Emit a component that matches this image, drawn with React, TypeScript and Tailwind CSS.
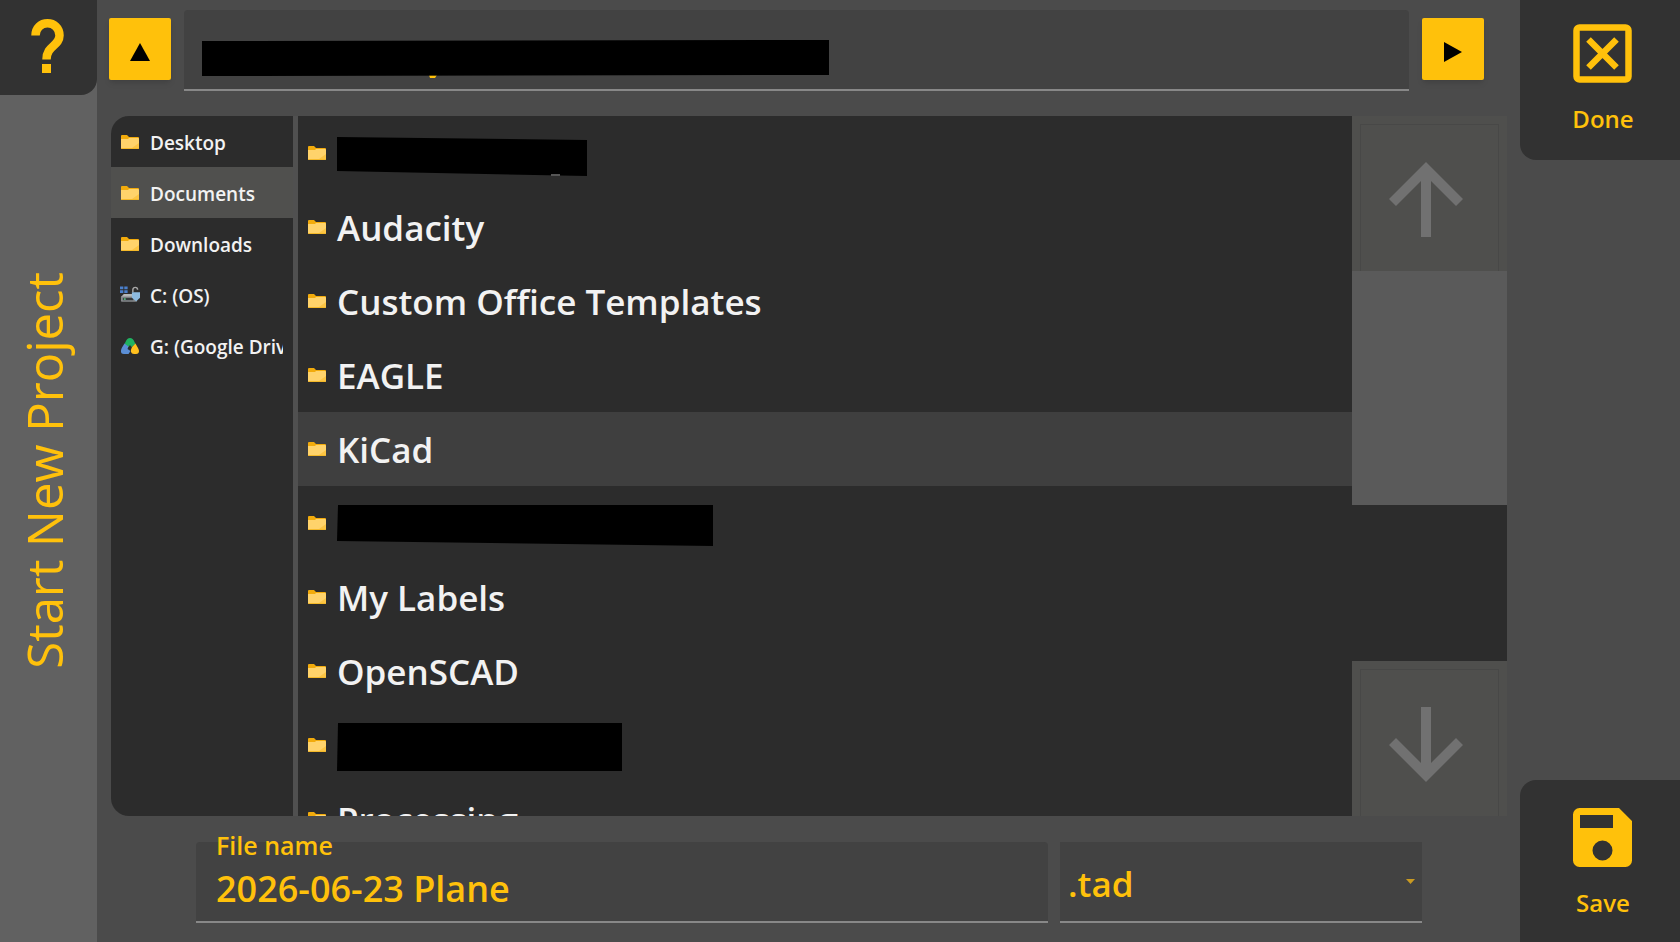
import React, { useState } from 'react'

type Redaction = {
  points: string
  mark?: string
  width: number
  height: number
}

type Entry = {
  name: string
  redaction?: Redaction
}

type Place = {
  name: string
  icon: React.ReactNode
}

const FolderIcon = () => (
  <svg width="20" height="16" viewBox="0 0 20 16" className="shrink-0" aria-hidden="true">
    <path d="M1 2a1 1 0 0 1 1-1h5l2 2h9a1 1 0 0 1 1 1v2H1z" fill="#f2ab0c" />
    <path d="M1 5h7l1-1h9a1 1 0 0 1 1 1v9a1 1 0 0 1-1 1H2a1 1 0 0 1-1-1z" fill="#ffd36b" />
    <path d="M1 14h18a1 1 0 0 1-1 1H2a1 1 0 0 1-1-1z" fill="#f5b929" />
    <path d="M19 9v5h-7z" fill="#fcc544" />
  </svg>
)

const DriveIcon = () => (
  <svg width="20" height="18" viewBox="0 0 21 18" className="shrink-0" aria-hidden="true">
    <path d="M0 0h3.500v3H0zM4.500 0h3.500v3H4.500zM0 4h3.500v3H0zM4.500 4h3.500v3H4.500z" fill="#4a7fcb" />
    <path d="M4 8h10l3 3H1z" fill="#b4b7b9" />
    <rect x="1" y="10.500" width="17" height="5.500" rx="1" fill="#85898c" />
    <rect x="3" y="12" width="11" height="2.500" fill="#35393b" />
    <rect x="4" y="12.500" width="2" height="1.500" fill="#5fd08a" />
    <path d="M13.500 6V3.500a2.500 2.500 0 0 1 5 0" fill="none" stroke="#a9a9a9" strokeWidth="1.500" />
    <path d="M12.500 6H21v6l-4 3.500-4.500-3.500z" fill="#8dbbe0" />
  </svg>
)

const GoogleDriveIcon = () => (
  <svg width="20" height="18" viewBox="0 0 20 18" className="shrink-0" aria-hidden="true">
    <path d="M5.500 5q1.500-4 4.500-4t4.500 4l1 2-4 3-1.500-2-1.500 2-4-3z" fill="#1fb261" />
    <path d="M4.500 6.500 8.500 9.500 7.500 12l3 2-2 3H4q-3.500 0-3-3.500 0-1 1-3z" fill="#5b8fd6" />
    <path d="M15.500 6.500 18 11q1 2 1 3 0 3-3 3h-2q-2.500 0-3-2t1-5z" fill="#ffc01e" />
  </svg>
)

const ArrowIcon = ({ className = '' }: { className?: string }) => (
  <svg width="74" height="75" viewBox="0 0 74 75" className={className} aria-hidden="true">
    <path d="M37 0 74 37l-7 7L42 19v56H32V19L7 44l-7-7z" fill="#717171" />
  </svg>
)

const places: Place[] = [
  { name: 'Desktop', icon: <FolderIcon /> },
  { name: 'Documents', icon: <FolderIcon /> },
  { name: 'Downloads', icon: <FolderIcon /> },
  { name: 'C: (OS)', icon: <DriveIcon /> },
  { name: 'G: (Google Drive)', icon: <GoogleDriveIcon /> },
]

const entries: Entry[] = [
  {
    name: '',
    redaction: {
      points: '0,5 250,8 250,44 0,39',
      mark: 'M214 42h9v2h-9z',
      width: 250,
      height: 44,
    },
  },
  { name: 'Audacity' },
  { name: 'Custom Office Templates' },
  { name: 'EAGLE' },
  { name: 'KiCad' },
  { name: '', redaction: { points: '1,2 376,2 376,43 0,38', width: 376, height: 43 } },
  { name: 'My Labels' },
  { name: 'OpenSCAD' },
  { name: '', redaction: { points: '1,2 285,2 285,50 0,50', width: 285, height: 50 } },
  { name: 'Processing' },
]

const RedactedName = ({ points, mark, width, height }: Redaction) => (
  <svg width={width} height={height} aria-hidden="true">
    <polygon points={points} fill="#000" />
    {mark && <path d={mark} fill="#555" />}
  </svg>
)

const TitleBar = () => (
  <aside className="flex w-[97px] shrink-0 flex-col bg-[#616161]">
    <button
      type="button"
      aria-label="Help"
      className="flex h-[95px] items-center justify-center rounded-br-2xl bg-[#323232] pr-0.5 pb-1"
    >
      <svg width="34" height="54" viewBox="0 0 34 54" aria-hidden="true">
        <path
          d="M4.500 16.500C4.500 9 10 4.300 16.500 4.300S28.500 9 28.500 16.500C28.500 27 15.500 26.500 15.500 40.500"
          fill="none"
          stroke="#ffc10b"
          strokeWidth="8.500"
        />
        <path d="M11 45h9v9h-9z" fill="#ffc10b" />
      </svg>
    </button>
    <div className="flex flex-1 items-center justify-center pr-2.5 pb-24">
      <h1 className="rotate-180 text-[49px] leading-[60px] whitespace-nowrap [writing-mode:vertical-rl]">
        Start New Project
      </h1>
    </div>
  </aside>
)

const PathBar = () => (
  <div className="flex items-start gap-[13px] pt-[10px] pr-9 pl-3">
    <button
      type="button"
      aria-label="Parent folder"
      className="mt-2 flex size-[62px] shrink-0 items-center justify-center rounded-xs bg-[#ffc10b] pt-1.5 shadow-md"
    >
      <svg width="20" height="18" viewBox="0 0 20 18" aria-hidden="true">
        <path d="M10 0 20 18H0z" fill="#000" />
      </svg>
    </button>
    <div className="relative min-w-0 flex-1">
      <input
        aria-label="Folder path"
        className="block h-[81px] w-full rounded-t border-b-2 border-[#888888] bg-[#424242] px-5 text-[36px] outline-none"
      />
      <svg width="628" height="39" className="absolute top-[30px] left-[18px]" aria-hidden="true">
        <path d="M227 35h8l-2 3h-5z" fill="#ffc10b" />
        <polygon points="0,1 627,0 627,35 0,36" fill="#000" />
      </svg>
    </div>
    <button
      type="button"
      aria-label="Go"
      className="mt-2 flex size-[62px] shrink-0 items-center justify-center rounded-xs bg-[#ffc10b] pt-1.5 shadow-md"
    >
      <svg width="18" height="20" viewBox="0 0 18 20" aria-hidden="true">
        <path d="M0 0 18 10 0 20z" fill="#000" />
      </svg>
    </button>
  </div>
)

const PlacesList = () => {
  const [selected, setSelected] = useState('Documents')

  return (
    <nav className="w-[182px] shrink-0 bg-[#2c2c2c]">
      {places.map(({ name, icon }) => (
        <button
          key={name}
          type="button"
          onClick={() => setSelected(name)}
          className={`flex h-[51px] w-full items-center gap-2.5 pr-2.5 pl-[9px] ${
            selected === name ? 'bg-[#50504e]' : ''
          }`}
        >
          {icon}
          <span className="overflow-hidden pt-0.5 text-[19px] leading-7 font-semibold whitespace-nowrap text-[#f2f2f2]">
            {name}
          </span>
        </button>
      ))}
    </nav>
  )
}

const FileList = () => (
  <ul className="min-w-0 flex-1 overflow-hidden bg-[#2c2c2c]">
    {entries.map(({ name, redaction }, i) => (
      <li key={i}>
        <button
          type="button"
          aria-label={name || 'Hidden folder'}
          className={`flex h-[74px] w-full items-center gap-2.5 pl-[9px] text-left ${
            name === 'KiCad' ? 'bg-[#3f3f3f]' : ''
          }`}
        >
          <FolderIcon />
          <span className="pt-0.5 text-[35px] leading-[48px] font-semibold whitespace-nowrap text-[#f2f2f2]">
            {redaction ? <RedactedName {...redaction} /> : name}
          </span>
        </button>
      </li>
    ))}
  </ul>
)

const ScrollBar = () => (
  <div className="flex w-[155px] shrink-0 flex-col bg-[#2c2c2c]">
    <button type="button" aria-label="Scroll up" className="h-[155px] shrink-0 bg-[#4f4f4d] px-2 pt-2">
      <span className="flex h-full items-center justify-center border-x border-t border-[#484847] pt-0.5 pr-2">
        <ArrowIcon />
      </span>
    </button>
    <div className="flex-1">
      <div className="h-3/5 bg-[#5a5a5a]" />
    </div>
    <button type="button" aria-label="Scroll down" className="h-[155px] shrink-0 bg-[#4f4f4d] px-2 pt-2">
      <span className="flex h-full items-center justify-center border-x border-t border-[#484847] pt-0.5 pr-2">
        <ArrowIcon className="rotate-180" />
      </span>
    </button>
  </div>
)

const FileNameBar = () => {
  const [fileName, setFileName] = useState('2026-06-23 Plane')

  return (
    <div className="flex gap-3 pt-[26px] pr-[98px] pb-[19px] pl-[99px]">
      <div className="relative min-w-0 flex-1">
        <label htmlFor="file-name" className="absolute -top-[13px] left-5 text-[25px] leading-8 font-semibold">
          File name
        </label>
        <input
          id="file-name"
          value={fileName}
          onChange={(e) => setFileName(e.target.value)}
          className="block h-[81px] w-full rounded-t border-b-2 border-[#888888] bg-[#424242] px-5 pt-3.5 text-[36px] font-semibold outline-none"
        />
      </div>
      <div className="relative w-[362px] shrink-0">
        <select
          aria-label="File type"
          className="block h-[81px] w-full appearance-none border-b-2 border-[#888888] bg-[#424242] px-2 pt-1.5 text-[35px] font-semibold outline-none"
        >
          <option>.tad</option>
        </select>
        <svg
          width="9"
          height="5"
          viewBox="0 0 9 5"
          className="pointer-events-none absolute top-[37px] right-[7px]"
          aria-hidden="true"
        >
          <path d="M0 0h9L4.500 5z" fill="#c99a22" />
        </svg>
      </div>
    </div>
  )
}

const Actions = () => (
  <div className="flex w-40 shrink-0 flex-col justify-between">
    <button
      type="button"
      className="flex h-40 flex-col items-center gap-[17px] rounded-bl-2xl bg-[#323232] pt-6 pl-1.5 text-[24px] leading-9 font-semibold"
    >
      <svg width="60" height="60" viewBox="0 0 60 60" className="shrink-0" aria-hidden="true">
        <rect x="3.500" y="3.500" width="52" height="52" rx="3" fill="none" stroke="#ffc10b" strokeWidth="6.500" />
        <path d="M15.500 15.500 43.500 43.500M43.500 15.500 15.500 43.500" stroke="#ffc10b" strokeWidth="6.500" />
      </svg>
      Done
    </button>
    <button
      type="button"
      className="flex h-[162px] flex-col items-center gap-[17px] rounded-tl-2xl bg-[#323232] pt-7 pl-1.5 text-[24px] leading-9 font-semibold"
    >
      <svg width="60" height="60" viewBox="0 0 60 60" className="shrink-0" aria-hidden="true">
        <path
          fillRule="evenodd"
          d="M6.500 0H46l13 13v39.500a6.500 6.500 0 0 1-6.500 6.500h-46A6.500 6.500 0 0 1 0 52.500v-46A6.500 6.500 0 0 1 6.500 0zM7 7v13h33V7zM29.500 32.500a10 10 0 1 0 0 20 10 10 0 0 0 0-20z"
          fill="#ffc10b"
        />
      </svg>
      Save
    </button>
  </div>
)

const App = () => (
  <div className="flex h-screen overflow-hidden bg-[#4b4b4b] font-['Open_Sans','Noto_Sans',sans-serif] text-[#ffc10b]">
    <TitleBar />
    <main className="flex min-w-0 flex-1 flex-col">
      <PathBar />
      <div className="mt-[25px] mr-[13px] ml-3.5 flex min-h-0 flex-1 gap-[5px] overflow-hidden rounded-l-[18px] bg-[#505050]">
        <PlacesList />
        <div className="flex min-w-0 flex-1">
          <FileList />
          <ScrollBar />
        </div>
      </div>
      <FileNameBar />
    </main>
    <Actions />
  </div>
)

export default App
